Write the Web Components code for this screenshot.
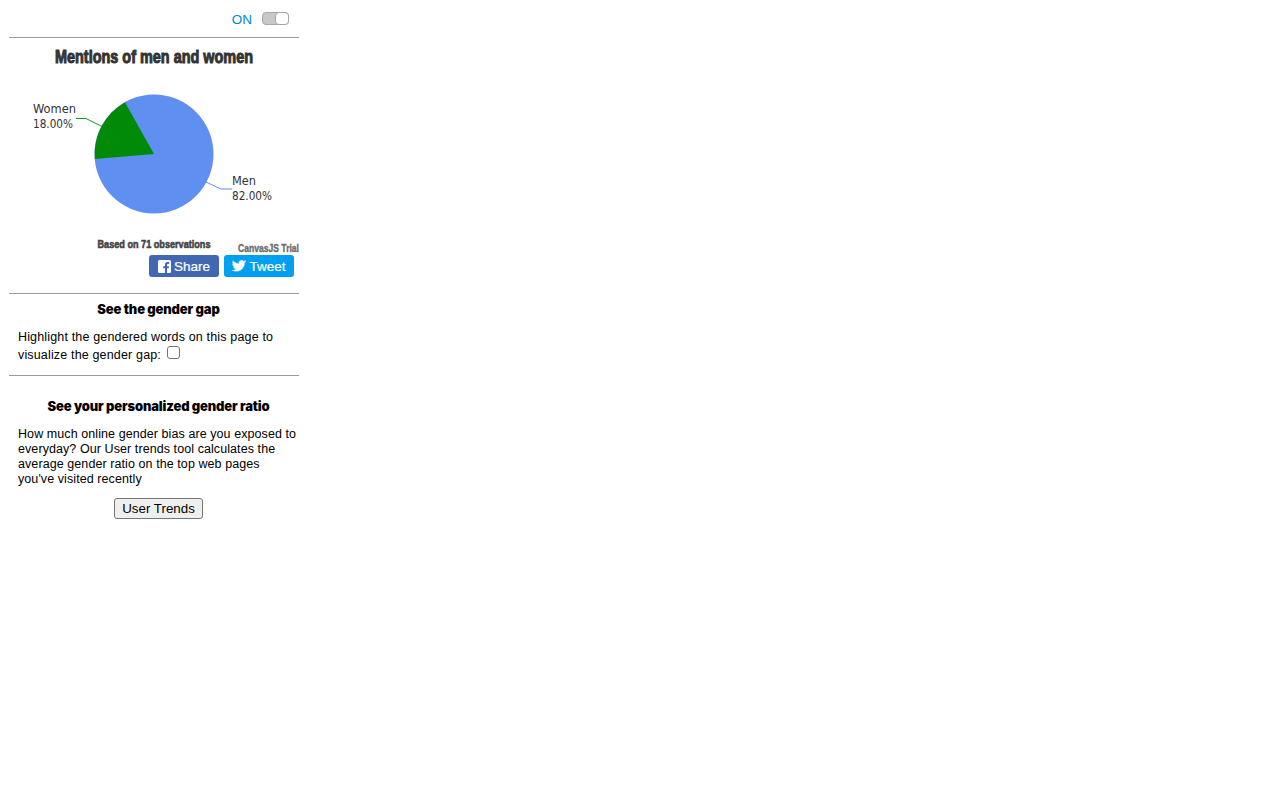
<!DOCTYPE html>
<html>
<head>
<meta charset="utf-8">
<style>
    html, body { margin: 0; background: #fff; }
    body { font-family: "Liberation Sans", Arial, sans-serif; font-size: 12px; color: #000; }
</style>
</head>
<body>
<gender-panel>
    <power-toggle></power-toggle>
    <rule-line></rule-line>
    <mentions-chart></mentions-chart>
    <share-buttons></share-buttons>
    <rule-line></rule-line>
    <info-block heading="See the gender gap" class="gap">
        <gap-text></gap-text>
    </info-block>
    <rule-line></rule-line>
    <info-block heading="See your personalized gender ratio" class="ratio">
        <ratio-text></ratio-text>
    </info-block>
</gender-panel>

<script>
class GenderPanel extends HTMLElement{
    constructor(){
        super();
        this.attachShadow({mode : 'open'});
    }

    connectedCallback(){
        this.shadowRoot.innerHTML = `
        <style>
        :host { display: flex; flex-direction: column; width: 290px; margin-left: 9px; }
        </style>
        <slot></slot>
        `
    }
}

class PowerToggle extends HTMLElement{
    constructor(){
        super();
        this.attachShadow({mode : 'open'});
    }

    connectedCallback(){
        this.shadowRoot.innerHTML = `
        <style>
        :host { display: flex; justify-content: flex-end; align-items: center; height: 37px; padding-right: 10px; box-sizing: border-box; gap: 10px; }
        .label { color: #0088cc; font: 13.5px/14px "Liberation Sans", sans-serif; margin-top: 2px; }
        .track { display: block; width: 27px; height: 13px; box-sizing: border-box; border: 1px solid #a6a6a6; border-radius: 4px; background: #c8c8c8; position: relative; }
        .knob { position: absolute; right: -1px; top: -1px; width: 14px; height: 13px; box-sizing: border-box; border: 1px solid #a6a6a6; border-radius: 4px; background: #fff; }
        </style>
        <span class="label">ON</span>
        <span class="track"><span class="knob"></span></span>
        `
    }
}

class RuleLine extends HTMLElement{
    constructor(){
        super();
        this.attachShadow({mode : 'open'});
    }

    connectedCallback(){
        this.shadowRoot.innerHTML = `
        <style>
        :host { display: block; height: 1px; background: #9a9a9a; }
        </style>
        `
    }
}

class MentionsChart extends HTMLElement{
    constructor(){
        super();
        this.attachShadow({mode : 'open'});
    }

    connectedCallback(){
        this.shadowRoot.innerHTML = `
        <style>
        :host { display: block; height: 216px; }
        svg { display: block; overflow: visible; }
        .title { font: bold 18px "Liberation Sans", sans-serif; fill: #333; stroke: #333; stroke-width: 1px; }
        .label { font: 12px "DejaVu Sans Condensed", "DejaVu Sans", sans-serif; fill: #333; }
        .sub { font: bold 11px "Liberation Sans", sans-serif; fill: #444; stroke: #444; stroke-width: .6px; }
        .trial { font: bold 10.500px "Liberation Sans", sans-serif; fill: #666; stroke: #777; stroke-width: .4px; }
        </style>
        <svg width="290" height="216" viewBox="0 0 290 216">
            <text class="title" x="145" y="25" text-anchor="middle" textLength="198" lengthAdjust="spacingAndGlyphs">Mentions of men and women</text>
            <circle cx="145" cy="116" r="59.5" fill="#5f8ff0"/>
            <path d="M145 116 L116 64.500 A59.5 59.5 0 0 0 85.8 121 Z" fill="#008a08"/>
            <polyline points="93,88.500 77,80.500 67,80.500" fill="none" stroke="#00a020" stroke-width="1"/>
            <polyline points="197,144 212,151 223,151" fill="none" stroke="#5f8ff0" stroke-width="1"/>
            <text class="label" x="24" y="75" textLength="43" lengthAdjust="spacingAndGlyphs">Women</text>
            <text class="label" x="24" y="90" textLength="40" lengthAdjust="spacingAndGlyphs">18.00%</text>
            <text class="label" x="223" y="147" textLength="24" lengthAdjust="spacingAndGlyphs">Men</text>
            <text class="label" x="223" y="162" textLength="40" lengthAdjust="spacingAndGlyphs">82.00%</text>
            <text class="sub" x="145" y="209.500" text-anchor="middle" textLength="113" lengthAdjust="spacingAndGlyphs">Based on 71 observations</text>
            <text class="trial" x="229" y="214" textLength="61" lengthAdjust="spacingAndGlyphs">CanvasJS Trial</text>
        </svg>
        `
    }
}

class ShareButtons extends HTMLElement{
    constructor(){
        super();
        this.attachShadow({mode : 'open'});
    }

    connectedCallback(){
        this.shadowRoot.innerHTML = `
        <style>
        :host { display: flex; justify-content: flex-end; gap: 5px; padding: 1px 5px 16px 0; }
        a { display: flex; align-items: center; justify-content: center; gap: 3px; height: 22px; border-radius: 3px; color: #fff; text-decoration: none; font: 13.5px "Liberation Sans", sans-serif; -webkit-text-stroke: .2px #fff; }
        .fb { width: 70px; background: #4267b2; }
        .tw { width: 70px; background: #00a0f0; }
        svg { display: block; }
        </style>
        <a class="fb" href="#">
            <svg width="13" height="13" viewBox="0 0 13 13"><path fill="#fff" d="M1.5 0h10A1.5 1.5 0 0 1 13 1.500v10a1.500 1.500 0 0 1-1.500 1.500H9V8.200h1.700l.3-2H9V5c0-.6.300-1 1-1h1.100V2.200C10.800 2.100 10.200 2 9.600 2 8 2 7 3 7 4.700v1.500H5.200v2H7V13H1.500A1.500 1.500 0 0 1 0 11.500v-10A1.500 1.500 0 0 1 1.500 0z"/></svg>
            <span>Share</span>
        </a>
        <a class="tw" href="#">
            <svg width="14" height="12" viewBox="0 0 24 20"><path fill="#fff" stroke="#fff" stroke-width=".6" d="M24 2.400c-.9.400-1.800.7-2.800.8 1-.6 1.800-1.600 2.200-2.700-1 .6-2 1-3.100 1.200C19.300.7 18 0 16.600 0c-2.700 0-4.900 2.200-4.900 4.900 0 .4 0 .8.100 1.100C7.700 5.800 4.100 3.900 1.700.9c-.4.700-.7 1.600-.7 2.500 0 1.700.9 3.200 2.200 4.100-.8 0-1.600-.2-2.200-.6v.1c0 2.400 1.700 4.400 3.900 4.800-.4.100-.8.200-1.300.2-.3 0-.6 0-.9-.1.6 2 2.400 3.400 4.600 3.400-1.700 1.300-3.800 2.100-6.100 2.100-.4 0-.8 0-1.200-.1C2.200 18.300 4.800 19 7.500 19c9.100 0 14-7.500 14-14v-.6c1-.7 1.800-1.600 2.500-2z"/></svg>
            <span>Tweet</span>
        </a>
        `
    }
}

class InfoBlock extends HTMLElement{
    constructor(){
        super();
        this.attachShadow({mode : 'open'});
    }

    connectedCallback(){
        this.shadowRoot.innerHTML = `
        <style>
        :host { display: block; }
        :host(.gap) { padding: 7px 0 11px; }
        :host(.ratio) { padding: 22px 0 0; }
        :host(.ratio) h3 { margin-bottom: 13px; }
        h3 { margin: 0 0 11px; padding-left: 9px; text-align: center; font: 900 13px/16px Inter, "Liberation Sans", sans-serif; letter-spacing: -.15px; color: #000; }
        </style>
        <h3>${this.getAttribute('heading')}</h3>
        <slot></slot>
        `
    }
}

class GapText extends HTMLElement{
    constructor(){
        super();
        this.attachShadow({mode : 'open'});
    }

    connectedCallback(){
        this.shadowRoot.innerHTML = `
        <style>
        :host { display: block; padding-left: 9px; font: 12.5px/18px "Liberation Sans", sans-serif; letter-spacing: .16px; }
        input { appearance: none; width: 13px; height: 13px; margin: 0 0 0 2px; box-sizing: border-box; border: 1px solid #767676; border-radius: 3px; background: #fff; vertical-align: 0; }
        </style>
        Highlight the gendered words on this page to<br>
        visualize the gender gap: <input type="checkbox">
        `
    }
}

class RatioText extends HTMLElement{
    constructor(){
        super();
        this.attachShadow({mode : 'open'});
    }

    connectedCallback(){
        this.shadowRoot.innerHTML = `
        <style>
        :host { display: block; padding-left: 9px; font: 12.5px/15px "Liberation Sans", sans-serif; letter-spacing: .08px; }
        p { margin: 0 0 11px; }
        .action { display: flex; justify-content: center; }
        button { width: 89px; height: 21px; padding: 0; box-sizing: border-box; border: 1px solid #767676; border-radius: 3px; background: #efefef; color: #000; font: 13.33px "Liberation Sans", sans-serif; letter-spacing: 0; }
        </style>
        <p>How much online gender bias are you exposed to<br>
        everyday? Our User trends tool calculates the<br>
        average gender ratio on the top web pages<br>
        you've visited recently</p>
        <div class="action"><button>User Trends</button></div>
        `
    }
}

customElements.define('gender-panel', GenderPanel);
customElements.define('power-toggle', PowerToggle);
customElements.define('rule-line', RuleLine);
customElements.define('mentions-chart', MentionsChart);
customElements.define('share-buttons', ShareButtons);
customElements.define('info-block', InfoBlock);
customElements.define('gap-text', GapText);
customElements.define('ratio-text', RatioText);
</script>
</body>
</html>
